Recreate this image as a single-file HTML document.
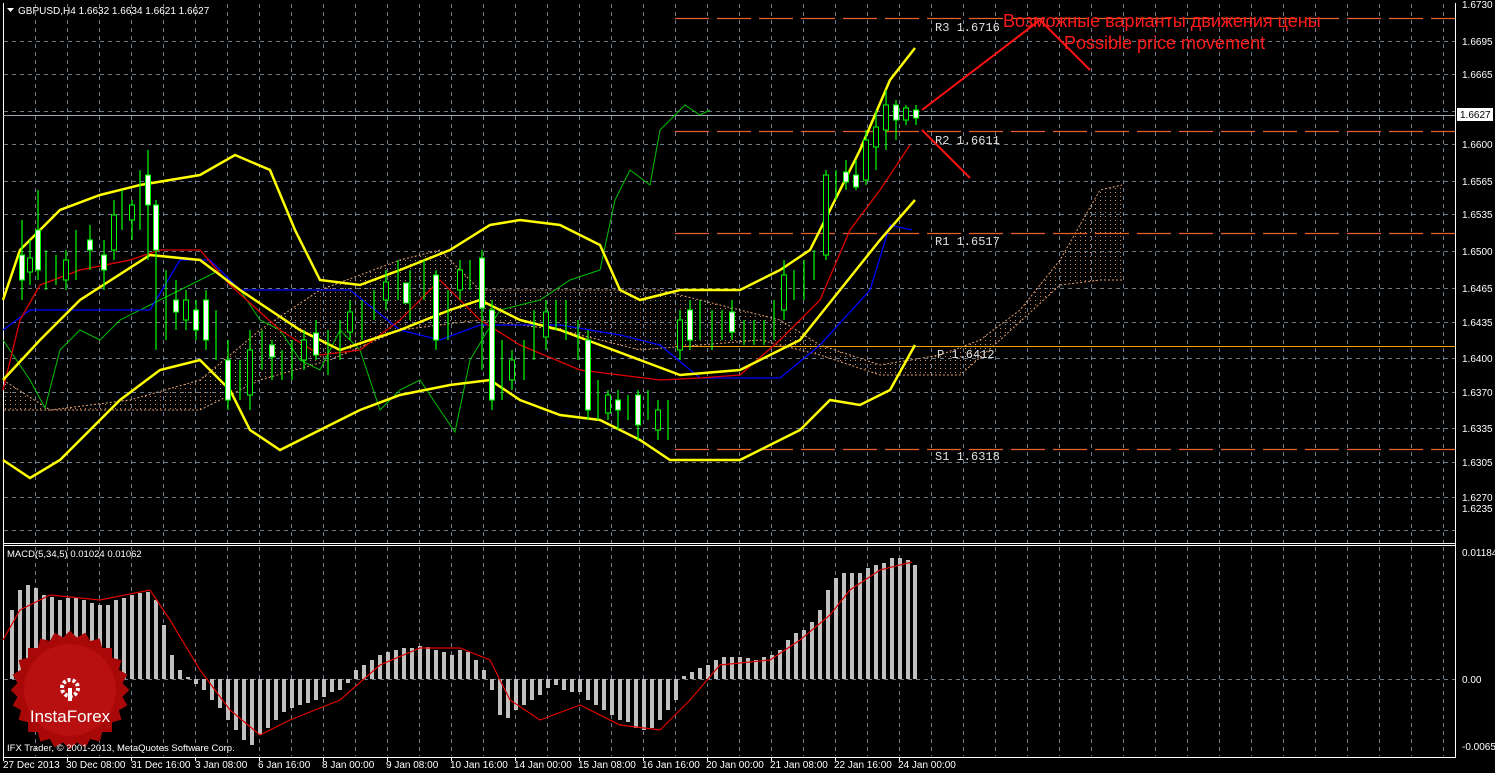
<!DOCTYPE html>
<html><head><meta charset="utf-8"><style>
html,body{margin:0;padding:0;background:#000;width:1495px;height:773px;overflow:hidden}
svg{display:block}
text{font-family:"Liberation Sans",sans-serif}
text.m{font-family:"Liberation Mono",monospace}
</style></head><body>
<svg width="1495" height="773" viewBox="0 0 1495 773" xmlns="http://www.w3.org/2000/svg">
<defs>
<pattern id="hatch" width="5" height="4" patternUnits="userSpaceOnUse"><rect x="0" y="0" width="1" height="1" fill="#c88860"/></pattern>
</defs>
<rect width="1495" height="773" fill="#000"/>
<path d="M3.5 3V757.5H1455.5V3M3 543.5H1455M3 545.5H1455" stroke="#fff" fill="none" stroke-width="1"/>
<g stroke="#6e7b8b" stroke-dasharray="4,4" stroke-width="1">
<path d="M35.5 4V543M67.5 4V543M99.5 4V543M131.5 4V543M163.5 4V543M195.5 4V543M227.5 4V543M259.5 4V543M291.5 4V543M323.5 4V543M355.5 4V543M387.5 4V543M419.5 4V543M451.5 4V543M483.5 4V543M515.5 4V543M547.5 4V543M579.5 4V543M611.5 4V543M643.5 4V543M675.5 4V543M707.5 4V543M739.5 4V543M771.5 4V543M803.5 4V543M835.5 4V543M867.5 4V543M899.5 4V543M931.5 4V543M963.5 4V543M995.5 4V543M1027.5 4V543M1059.5 4V543M1091.5 4V543M1123.5 4V543M1155.5 4V543M1187.5 4V543M1219.5 4V543M1251.5 4V543M1283.5 4V543M1315.5 4V543M1347.5 4V543M1379.5 4V543M1411.5 4V543M1443.5 4V543"/>
<path d="M35.5 547V756M67.5 547V756M99.5 547V756M131.5 547V756M163.5 547V756M195.5 547V756M227.5 547V756M259.5 547V756M291.5 547V756M323.5 547V756M355.5 547V756M387.5 547V756M419.5 547V756M451.5 547V756M483.5 547V756M515.5 547V756M547.5 547V756M579.5 547V756M611.5 547V756M643.5 547V756M675.5 547V756M707.5 547V756M739.5 547V756M771.5 547V756M803.5 547V756M835.5 547V756M867.5 547V756M899.5 547V756M931.5 547V756M963.5 547V756M995.5 547V756M1027.5 547V756M1059.5 547V756M1091.5 547V756M1123.5 547V756M1155.5 547V756M1187.5 547V756M1219.5 547V756M1251.5 547V756M1283.5 547V756M1315.5 547V756M1347.5 547V756M1379.5 547V756M1411.5 547V756M1443.5 547V756"/>
<path d="M4 41.5H1455M4 74.5H1455M4 111.5H1455M4 144.5H1455M4 181.5H1455M4 214.5H1455M4 251.5H1455M4 288.5H1455M4 322.5H1455M4 358.5H1455M4 392.5H1455M4 428.5H1455M4 462.5H1455M4 497.5H1455M4 530.5H1455M4 679.5H1455"/>
</g>
<g fill="#fff" font-size="10">
<text x="1462" y="8">1.6730</text><text x="1462" y="45">1.6695</text><text x="1462" y="78">1.6665</text>
<text x="1462" y="148">1.6600</text><text x="1462" y="185">1.6565</text><text x="1462" y="218">1.6535</text>
<text x="1462" y="255">1.6500</text><text x="1462" y="292">1.6465</text><text x="1462" y="326">1.6435</text>
<text x="1462" y="362">1.6400</text><text x="1462" y="396">1.6370</text><text x="1462" y="432">1.6335</text>
<text x="1462" y="466">1.6305</text><text x="1462" y="501">1.6270</text><text x="1462" y="512">1.6235</text>
<text x="1462" y="556">0.01184</text><text x="1462" y="683">0.00</text><text x="1462" y="750">-0.00658</text>
</g>
<rect x="1457" y="108" width="36" height="13" fill="#fff"/>
<text x="1460" y="118" font-size="10" fill="#000">1.6627</text>
<g fill="#fff" font-size="10">
<text x="3" y="768">27 Dec 2013</text><text x="66" y="768">30 Dec 08:00</text><text x="131" y="768">31 Dec 16:00</text>
<text x="195" y="768">3 Jan 08:00</text><text x="258" y="768">6 Jan 16:00</text><text x="322" y="768">8 Jan 00:00</text>
<text x="386" y="768">9 Jan 08:00</text><text x="450" y="768">10 Jan 16:00</text><text x="514" y="768">14 Jan 00:00</text>
<text x="578" y="768">15 Jan 08:00</text><text x="642" y="768">16 Jan 16:00</text><text x="706" y="768">20 Jan 00:00</text>
<text x="770" y="768">21 Jan 08:00</text><text x="834" y="768">22 Jan 16:00</text><text x="898" y="768">24 Jan 00:00</text>
</g>
<g stroke="#fff"><path d="M3.5 757v4M67.5 757v4M131.5 757v4M195.5 757v4M259.5 757v4M323.5 757v4M387.5 757v4M451.5 757v4M515.5 757v4M579.5 757v4M643.5 757v4M707.5 757v4M771.5 757v4M835.5 757v4M899.5 757v4"/></g>
<polygon fill="url(#hatch)" points="3,380 50,410 130,400 200,380 260,330 320,290 400,260 440,250 480,290 560,290 660,290 700,300 780,320 820,345 880,365 940,355 980,340 1020,310 1060,260 1100,190 1122,185 1122,280 1100,280 1060,285 1000,340 960,375 920,375 880,375 820,355 760,340 700,345 640,350 560,330 480,320 400,330 330,360 260,380 200,410 130,410 50,410 3,410"/>
<polyline fill="none" stroke="#e0a070" stroke-dasharray="2,2" points="3,380 50,410 130,400 200,380 260,330 320,290 400,260 440,250 480,290 560,290 660,290 700,300 780,320 820,345 880,365 940,355 980,340 1020,310 1060,260 1100,190 1122,185"/>
<polyline fill="none" stroke="#e0a070" stroke-dasharray="2,2" points="1122,280 1100,280 1060,285 1000,340 960,375 920,375 880,375 820,355 760,340 700,345 640,350 560,330 480,320 400,330 330,360 260,380 200,410 130,410 50,410 3,410"/>
<g stroke="#e8602c" stroke-width="1.2" stroke-dasharray="34,8">
<path d="M675 18.5H1455M675 131.5H1455M675 233.5H1455M675 449.5H1455"/>
</g>
<path d="M675 346.5H1455" stroke="#f0a000" stroke-width="1"/>
<path d="M3 115.5H1455" stroke="#a0a8b4" stroke-width="1"/>
<g fill="#e0e0e0" font-size="12">
<text class="m" x="935" y="31">R3  1.6716</text><text class="m" x="935" y="144">R2  1.6611</text><text class="m" x="935" y="245">R1  1.6517</text>
<text class="m" x="937" y="358">P  1.6412</text><text class="m" x="935" y="460">S1  1.6318</text>
</g>
<polyline fill="none" stroke="#00c000" stroke-width="1" points="3,340 30,380 45,408 60,350 80,330 100,340 120,320 140,310 160,300 180,290 200,280 220,270 240,290 260,320 280,330 300,360 320,370 340,330 360,350 380,410 400,390 420,380 440,410 455,432 470,360 500,310 540,300 570,280 600,270 615,200 630,170 650,185 660,130 685,105 700,115 710,110"/>
<polyline fill="none" stroke="#0000ff" stroke-width="1.3" points="3,330 30,310 150,310 180,260 210,260 240,290 300,290 350,290 400,330 440,340 480,325 560,325 620,335 660,345 700,378 780,378 820,345 870,290 890,225 912,230"/>
<polyline fill="none" stroke="#e00000" stroke-width="1.3" points="3,390 20,320 40,285 80,270 130,260 160,250 200,250 230,285 280,330 320,355 360,350 400,320 440,280 480,320 520,345 580,370 620,375 660,380 700,378 740,375 780,340 820,300 850,230 880,190 910,145"/>
<g fill="none" stroke="#ffff00" stroke-width="2.5">
<polyline points="3,300 20,250 60,210 100,195 140,185 200,175 235,155 270,170 295,230 320,280 360,285 400,270 450,250 490,225 520,220 560,225 600,245 620,290 640,300 680,290 740,290 780,270 810,250 830,210 860,150 890,80 915,48"/>
<polyline points="3,460 30,478 60,460 80,440 120,400 160,370 200,360 230,390 250,430 280,450 320,430 360,410 400,395 450,385 490,380 520,400 560,415 600,420 640,440 670,460 740,460 800,430 830,400 860,405 890,390 915,345"/>
<polyline points="3,380 40,340 80,300 150,255 200,260 240,290 300,330 340,350 400,330 450,310 480,300 520,320 560,330 600,345 640,360 680,375 740,370 800,340 840,290 880,240 915,200"/>
</g>
<g stroke="#00ff00" stroke-width="1.2">
<path d="M22 220V300M30 240V285M38 190V280M46 250V290M56 255V285M66 250V290M76 230V280M90 225V270M104 240V290M114 200V260M122 190V230M132 200V240M140 170V230M148 150V260M156 200V350M166 270V340M176 280V330M186 290V330M196 300V340M206 290V350M216 310V360M228 340V410M240 360V400M250 330V410M262 330V370M272 340V380M282 350V380M292 340V380M304 330V370M316 320V360M328 330V375M340 320V360M350 300V340M362 300V340M374 290V320M386 270V310M398 260V300M410 270V320M424 260V300M436 270V350M448 290V340M460 260V300M470 260V290M482 250V370M492 300V410M502 340V400M512 350V390M524 340V380M534 310V360M546 300V350M556 300V330M566 300V340M578 320V360M588 330V420M598 380V420M608 390V420M618 390V430M628 395V420M638 390V440M648 390V420M658 400V440M668 400V440M680 310V360M690 300V350M700 300V340M712 310V350M722 310V340M732 300V340M744 320V345M754 320V345M764 320V345M774 300V340M784 260V320M794 270V300M804 260V300M814 250V280M826 170V260M836 170V200M846 160V190M856 160V190M866 130V185M876 110V170M886 90V150M896 100V140M906 105V125M916 105V125"/>
</g>
<g stroke="#00ff00" stroke-width="1" fill="#fff">
<rect x="19.5" y="255" width="5" height="25"/><rect x="35.5" y="230" width="5" height="40"/><rect x="87.5" y="240" width="5" height="10"/><rect x="101.5" y="255" width="5" height="15"/><rect x="145.5" y="175" width="5" height="30"/><rect x="153.5" y="205" width="5" height="45"/><rect x="173.5" y="300" width="5" height="12"/><rect x="193.5" y="310" width="5" height="20"/><rect x="203.5" y="300" width="5" height="40"/><rect x="225.5" y="360" width="5" height="40"/><rect x="269.5" y="345" width="5" height="12"/><rect x="313.5" y="333" width="5" height="22"/><rect x="403.5" y="283" width="5" height="20"/><rect x="433.5" y="275" width="5" height="65"/><rect x="479.5" y="258" width="5" height="50"/><rect x="489.5" y="310" width="5" height="90"/><rect x="585.5" y="340" width="5" height="70"/><rect x="615.5" y="400" width="5" height="10"/><rect x="635.5" y="395" width="5" height="30"/><rect x="687.5" y="310" width="5" height="30"/><rect x="729.5" y="312" width="5" height="20"/><rect x="843.5" y="172" width="5" height="10"/><rect x="853.5" y="175" width="5" height="12"/><rect x="893.5" y="105" width="5" height="15"/><rect x="913.5" y="110" width="5" height="8"/>
</g>
<g stroke="#00ff00" stroke-width="1" fill="#000">
<rect x="27.5" y="258" width="5" height="14"/><rect x="63.5" y="260" width="5" height="20"/><rect x="111.5" y="215" width="5" height="35"/><rect x="129.5" y="205" width="5" height="15"/><rect x="183.5" y="300" width="5" height="20"/><rect x="247.5" y="350" width="5" height="45"/><rect x="301.5" y="340" width="5" height="20"/><rect x="347.5" y="312" width="5" height="20"/><rect x="383.5" y="282" width="5" height="18"/><rect x="457.5" y="270" width="5" height="20"/><rect x="509.5" y="360" width="5" height="20"/><rect x="543.5" y="312" width="5" height="25"/><rect x="605.5" y="395" width="5" height="18"/><rect x="655.5" y="410" width="5" height="20"/><rect x="677.5" y="320" width="5" height="30"/><rect x="781.5" y="275" width="5" height="35"/><rect x="823.5" y="175" width="5" height="80"/><rect x="863.5" y="140" width="5" height="40"/><rect x="873.5" y="127" width="5" height="20"/><rect x="883.5" y="105" width="5" height="25"/><rect x="903.5" y="108" width="5" height="12"/>
</g>
<g stroke="#ff1010" stroke-width="2" fill="none">
<polyline points="922,110 1040,20 1090,70"/><line x1="922" y1="130" x2="970" y2="178"/>
</g>
<text x="1003" y="27" fill="#ff1a1a" font-size="18">Возможные варианты движения цены</text>
<text x="1064" y="49" fill="#ff1a1a" font-size="18">Possible price movement</text>
<path d="M7 8h7l-3.5 4z" fill="#fff"/>
<text x="18" y="14" fill="#fff" font-size="10">GBPUSD,H4  1.6632 1.6634 1.6621 1.6627</text>
<text x="7" y="557" fill="#fff" font-size="9.5">MACD(5,34,5) 0.01024 0.01062</text>
<path stroke="#c0c0c0" stroke-width="4" fill="none" d="M12 679V610M20 679V590M28 679V585M36 679V588M44 679V595M52 679V597M60 679V600M68 679V598M76 679V598M84 679V600M92 679V603M100 679V605M108 679V605M116 679V600M124 679V598M132 679V595M140 679V593M148 679V592M156 679V600M164 679V625M172 679V655M180 679V670M188 679V677M196 679V684M204 679V690M212 679V700M220 679V708M228 679V720M236 679V730M244 679V740M252 679V745M260 679V735M268 679V728M276 679V720M284 679V712M292 679V708M300 679V705M308 679V703M316 679V700M324 679V697M332 679V692M340 679V690M348 679V683M356 679V670M364 679V665M372 679V660M380 679V655M388 679V652M396 679V650M404 679V648M412 679V648M420 679V646M428 679V647M436 679V650M444 679V652M452 679V655M460 679V650M468 679V652M476 679V660M484 679V670M492 679V690M500 679V715M508 679V718M516 679V710M524 679V705M532 679V700M540 679V695M548 679V688M556 679V685M564 679V690M572 679V692M580 679V692M588 679V700M596 679V705M604 679V710M612 679V715M620 679V720M628 679V722M636 679V728M644 679V730M652 679V728M660 679V720M668 679V710M676 679V700M684 679V676M692 679V672M700 679V668M708 679V665M716 679V660M724 679V657M732 679V657M740 679V657M748 679V658M756 679V660M764 679V657M772 679V655M780 679V650M788 679V640M796 679V633M804 679V630M812 679V622M820 679V610M828 679V590M836 679V578M844 679V573M852 679V573M860 679V573M868 679V568M876 679V565M884 679V563M892 679V558M900 679V558M908 679V560M915 679V565"/>
<polyline fill="none" stroke="#e00000" stroke-width="1.2" points="3,640 20,610 50,595 100,600 150,590 170,620 200,670 230,710 260,735 290,720 340,700 380,665 420,648 460,648 490,660 510,700 540,720 580,705 620,725 660,730 690,700 720,665 770,660 800,640 830,615 850,590 880,570 912,562"/>
<g transform="translate(70,690)" fill="#a80808">
<rect x="-42" y="-42" width="84" height="84"/>
<rect x="-42" y="-42" width="84" height="84" transform="rotate(15)"/>
<rect x="-42" y="-42" width="84" height="84" transform="rotate(30)"/>
<rect x="-42" y="-42" width="84" height="84" transform="rotate(45)"/>
<rect x="-42" y="-42" width="84" height="84" transform="rotate(60)"/>
<rect x="-42" y="-42" width="84" height="84" transform="rotate(75)"/>
<circle r="46" fill="#b81010"/>
<circle cx="0" cy="-2" r="8" fill="none" stroke="#fff" stroke-width="4" stroke-dasharray="3,2"/>
<rect x="-2" y="-2" width="4" height="13" fill="#fff"/>
<text x="0" y="32" fill="#fff" font-size="17" text-anchor="middle">InstaForex</text>
</g>
<text x="7" y="751" fill="#fff" font-size="9.5">IFX Trader, © 2001-2013, MetaQuotes Software Corp.</text>
</svg>
</body></html>
